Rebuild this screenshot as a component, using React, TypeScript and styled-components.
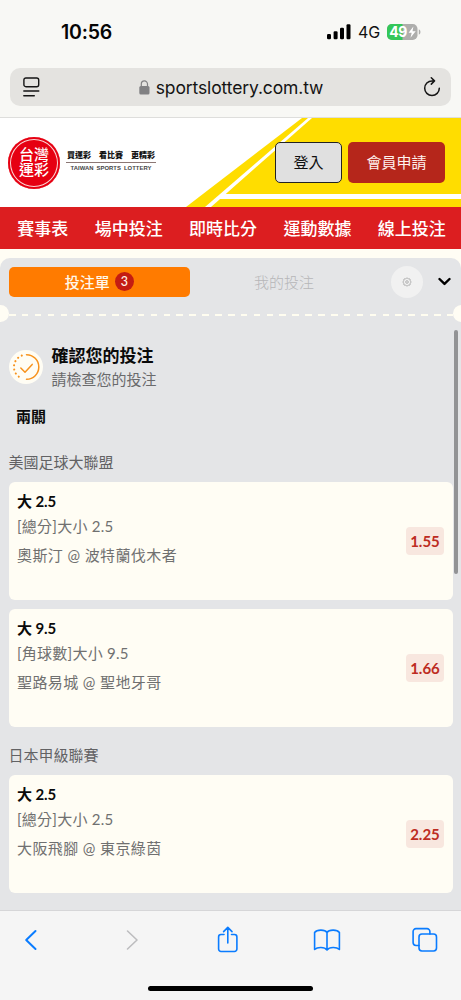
import React from "react";
import styled, { createGlobalStyle } from "styled-components";

const Global = createGlobalStyle`
  *{box-sizing:border-box}
  body{margin:0;background:#f8f8f5;font-family:Lato,"Noto Sans CJK TC",sans-serif;overflow:hidden}
  button{font-family:inherit;padding:0;border:0;background:none}
  svg{display:block;flex:none}
`;

const Screen = styled.div`width:461px;height:1000px;display:flex;flex-direction:column;overflow:hidden;background:#fffdf4;`;

const StatusBar = styled.div`
  height:68px;flex:none;display:flex;align-items:center;justify-content:space-between;
  padding:0 40px 5px 61px;background:#f8f8f5;font-family:Inter,sans-serif;
`;
const Clock = styled.div`font-size:19.5px;font-weight:600;letter-spacing:-0.2px;color:#050505;`;
const Signals = styled.div`display:flex;align-items:center;`;
const Network = styled.span`font-size:16px;color:#111;margin:0 8px 0 7px;letter-spacing:-0.2px;width:21px;`;

const UrlRow = styled.div`height:50px;flex:none;background:#f8f8f5;padding:0 10px;border-bottom:1px solid #dededc;`;
const UrlBar = styled.div`
  height:38px;border-radius:10px;background:#e4e3e0;display:flex;align-items:center;
  justify-content:space-between;padding:0 10px 0 13px;
`;
const Url = styled.div`
  display:flex;align-items:center;gap:6px;font-family:Inter,sans-serif;font-size:17.5px;
  letter-spacing:-0.12px;color:#141414;margin-right:1px;
`;

const SiteHeader = styled.header`height:89px;flex:none;position:relative;background:#fff;display:flex;align-items:center;padding:0 16px 0 8px;`;
const Backdrop = styled.svg`position:absolute;left:0;top:0;`;
const Badge = styled.div`
  width:52px;height:52px;border-radius:50%;background:#e60012;display:flex;align-items:center;justify-content:center;
  box-shadow:inset 0 0 0 2px #e60012,inset 0 0 0 3px #fbd5d5;flex:none;position:relative;
`;
const BadgeText = styled.div`width:34px;display:flex;flex-direction:column;align-items:center;font-size:15px;line-height:15px;font-weight:500;color:#fff;margin-top:-1px;`;
const Tagline = styled.div`margin:-4px 0 0 6px;width:90px;position:relative;`;
const TagTop = styled.div`
  display:flex;justify-content:space-between;font-size:8px;line-height:12px;font-weight:900;color:#111;
  padding:0 1px 1px;border-bottom:1px solid #8b7774;
`;
const TagBottom = styled.div`font:700 5.9px/8px "Liberation Sans",sans-serif;color:#444;text-align:center;padding-top:1px;white-space:nowrap;word-spacing:1.3px;letter-spacing:.04px;`;
const HeaderActions = styled.div`margin-left:auto;display:flex;gap:6px;position:relative;`;
const HeaderButton = styled.button<{ $primary?: boolean }>`
  width:${p => (p.$primary ? 97 : 67)}px;height:41px;border-radius:5px;font-size:15px;line-height:20px;padding-bottom:2px;
  border:${p => (p.$primary ? "0" : "1px solid #222")};
  background:${p => (p.$primary ? "#b5261b" : "#e0e0e0")};color:${p => (p.$primary ? "#fff1ee" : "#111")};
`;

const Nav = styled.nav`
  height:42px;flex:none;background:#dc1e20;display:flex;align-items:center;gap:26.4px;padding:0 0 2px 17.3px;
  color:#fff;font-size:17px;font-weight:500;white-space:nowrap;
`;

const Slip = styled.main`
  margin-top:9px;flex:1;min-height:0;background:#e4e5e7;border-radius:10px 10px 0 0;position:relative;
  display:flex;flex-direction:column;overflow:hidden;
`;
const Tabs = styled.div`height:47px;flex:none;display:flex;align-items:center;padding-left:8.5px;`;
const Tab = styled.button<{ $active?: boolean }>`
  width:${p => (p.$active ? 181.5 : 188)}px;height:30px;border-radius:5px;display:flex;align-items:center;justify-content:center;gap:5px;
  font-size:15px;line-height:20px;background:${p => (p.$active ? "#ff7b00" : "transparent")};
  color:${p => (p.$active ? "#fff8ea" : "#b6b6b8")};font-weight:${p => (p.$active ? 500 : 300)};
`;
const Count = styled.span`
  width:19px;height:19px;border-radius:50%;background:#c41c12;color:#fff3e8;font-size:12.5px;line-height:19px;font-weight:500;text-align:center;
`;
const GearButton = styled.button`
  width:32px;height:32px;border-radius:50%;background:#f1f1f1;display:flex;align-items:center;justify-content:center;margin:0 15px 0 13px;
`;
const Perforation = styled.div`height:18px;flex:none;display:flex;align-items:center;justify-content:space-between;overflow:hidden;`;
const Notch = styled.div<{ $right?: boolean }>`
  width:17px;height:17px;border-radius:50%;background:#fffdf4;flex:none;margin:${p => (p.$right ? "-1px -8.5px 0 0" : "-1px 0 0 -8.5px")};
`;
const Dashes = styled.div`
  flex:1;height:2px;margin-top:1px;
  background:repeating-linear-gradient(90deg,#fffdf0 0 6.6px,transparent 6.6px 12.88px);
`;

const Content = styled.div`padding:0 8.5px;`;
const Confirm = styled.div`display:flex;align-items:center;gap:9px;padding-top:19px;height:68px;`;
const StepIcon = styled.div`width:34px;height:34px;border-radius:50%;background:#fffdf4;display:flex;align-items:center;justify-content:center;`;
const Title = styled.h1`margin:0;font-size:17px;line-height:25px;font-weight:700;color:#0a0a0a;`;
const Subtitle = styled.p`margin:0;font-size:15px;line-height:22px;font-weight:400;color:#6a6a6c;`;
const Parlay = styled.h2`margin:15px 0 0 7.5px;font-size:15px;line-height:20px;font-weight:700;color:#0a0a0a;`;
const League = styled.h3<{ $first?: boolean }>`
  margin:${p => (p.$first ? "26px 0 10px" : "18px 0 10px")};font-size:15px;line-height:20px;font-weight:400;color:#626264;
`;
const Card = styled.article`
  width:444px;height:118px;border-radius:6px;background:#fffdf4;display:flex;align-items:center;justify-content:space-between;
  padding:0 8.5px;&+&{margin-top:9px}
`;
const CardBody = styled.div`align-self:flex-start;padding-top:8px;white-space:nowrap;color:#707070;font-size:15px;`;
const Pick = styled.div`font-weight:700;color:#0a0a0a;line-height:23px;font-size:15px;letter-spacing:-.1px;`;
const Market = styled.div`line-height:27px;letter-spacing:.25px;`;
const Teams = styled.div`line-height:31px;letter-spacing:.4px;`;
const Odds = styled.div`
  width:38px;height:28px;border-radius:4px;background:#f8e7df;color:#bd2c22;font-size:15px;font-weight:700;line-height:28px;text-align:center;
`;
const Scrollbar = styled.div`position:absolute;right:3px;top:72px;width:4px;height:244px;border-radius:2px;background:#929395;`;

const Toolbar = styled.footer`
  height:90px;flex:none;background:#f5f5f5;border-top:1px solid #d6d6d8;display:flex;flex-direction:column;align-items:center;justify-content:space-between;
`;
const ToolRow = styled.div`width:461px;height:58px;display:flex;align-items:center;justify-content:space-between;padding:0 22px 0 17px;`;
const HomeBar = styled.div`width:165px;height:5px;border-radius:3px;background:#000;margin-bottom:9px;`;

const ToolIcon = ({ children, color = "#0a7cff" }: { children: React.ReactNode; color?: string }) => (
  <svg width="28" height="28" viewBox="0 0 28 28" fill="none" stroke={color} strokeWidth="1.6" strokeLinecap="round" strokeLinejoin="round">{children}</svg>
);

const gearPath = Array.from({ length: 32 }, (_, i) => {
  const a = (i / 32) * Math.PI * 2;
  const r = 3.8 + 0.45 * Math.cos(a * 8);
  return `${i ? "L" : "M"}${(5 + r * Math.cos(a)).toFixed(2)} ${(5 + r * Math.sin(a)).toFixed(2)}`;
}).join("") + "Z";

type Bet = { pick: string; market: string; teams: string; odds: string };
const BetCard = ({ pick, market, teams, odds }: Bet) => (
  <Card>
    <CardBody><Pick>{pick}</Pick><Market>{market}</Market><Teams>{teams}</Teams></CardBody>
    <Odds>{odds}</Odds>
  </Card>
);

export default function App() {
  return (
    <Screen>
      <Global />
      <StatusBar>
        <Clock>10:56</Clock>
        <Signals>
          <svg width="24" height="16" viewBox="0 0 24 16" fill="#000">
            <rect x="0" y="10" width="4" height="5.3" rx="1.2" /><rect x="6.6" y="7.3" width="4" height="8" rx="1.2" />
            <rect x="13" y="3.8" width="4" height="11.5" rx="1.2" /><rect x="19.5" y="0.3" width="4" height="15" rx="1.2" />
          </svg>
          <Network>4G</Network>
          <svg width="34" height="16" viewBox="0 0 34 16">
            <defs><clipPath id="cell"><rect width="30.5" height="16" rx="4.8" /></clipPath></defs>
            <g clipPath="url(#cell)"><rect width="31" height="16" fill="#aeaeac" /><rect width="15.5" height="16" fill="#34c759" /></g>
            <path d="M31.8 5.3q1.7.6 1.7 2.7t-1.7 2.7z" fill="#aeaeac" />
            <text x="2.3" y="13" fill="#fff" fontFamily="Inter" fontWeight="700" fontSize="14" textLength="18">49</text>
            <path d="M26.4 2.6 21.6 8.7h3.1l-1.2 5 5.2-6.4h-3.2z" fill="#fff" />
          </svg>
        </Signals>
      </StatusBar>
      <UrlRow>
        <UrlBar>
          <svg width="17" height="20" viewBox="0 0 17 20" fill="none" stroke="#151515" strokeWidth="1.4" strokeLinecap="round">
            <rect x=".9" y="1" width="14.8" height="8.7" rx="2" /><path d="M.8 14h15M.8 18.8h10.5" />
          </svg>
          <Url>
            <svg width="11" height="15" viewBox="0 0 11 15"><rect x="0.3" y="6" width="10.2" height="8.4" rx="1.5" fill="#818183" /><path d="M2.3 6.500V4a3.100 3.100 0 0 1 6.200 0v2.500" fill="none" stroke="#818183" strokeWidth="1.2" /></svg>
            sportslottery.com.tw
          </Url>
          <svg width="18" height="20" viewBox="0 0 18 20" fill="none" stroke="#151515" strokeWidth="1.5" strokeLinecap="round" strokeLinejoin="round">
            <path d="M11 3.900H9A7.300 7.300 0 1 0 16.300 11.200M8.300.8l3.200 3.100-3.200 3.200" />
          </svg>
        </UrlBar>
      </UrlRow>
      <SiteHeader>
        <Backdrop width="461" height="89" viewBox="0 0 461 89">
          <path d="M302 0H461V89H186Z" fill="#ffdd00" />
          <path d="M308 0h4L211 89h-6Z" fill="#fff" />
          <path d="M222 76H461V81H217Z" fill="#fff" />
        </Backdrop>
        <Badge><BadgeText><span>台灣</span><span>運彩</span></BadgeText></Badge>
        <Tagline>
          <TagTop><span>買運彩</span><span>看比賽</span><span>更精彩</span></TagTop>
          <TagBottom>TAIWAN SPORTS LOTTERY</TagBottom>
        </Tagline>
        <HeaderActions><HeaderButton>登入</HeaderButton><HeaderButton $primary>會員申請</HeaderButton></HeaderActions>
      </SiteHeader>
      <Nav>{["賽事表", "場中投注", "即時比分", "運動數據", "線上投注"].map(t => <span key={t}>{t}</span>)}</Nav>
      <Slip>
        <Tabs>
          <Tab $active>投注單<Count>3</Count></Tab>
          <Tab>我的投注</Tab>
          <GearButton>
            <svg width="10" height="10" viewBox="0 0 10 10" fill="none" stroke="#aaa" strokeWidth=".9"><path d={gearPath} /><circle cx="5" cy="5" r="1.3" /></svg>
          </GearButton>
          <svg width="14" height="9" viewBox="0 0 14 9" fill="none" stroke="#000" strokeWidth="2.4" strokeLinecap="round" strokeLinejoin="round"><path d="M1.500 2l5 4.900L11.500 2" /></svg>
        </Tabs>
        <Perforation><Notch /><Dashes /><Notch $right /></Perforation>
        <Content>
          <Confirm>
            <StepIcon>
              <svg width="28" height="28" viewBox="0 0 28 28" fill="none" stroke="#f7931e" strokeWidth="1.5" strokeLinecap="round" strokeLinejoin="round">
                <path d="M14.500 1.700a12.300 12.300 0 0 1 0 24.600M8.800 15l4.200 4.200 7.200-7.800" />
                <path d="M9.800 2.600a12.200 12.200 0 0 0 0 22.800" strokeWidth="2.100" strokeDasharray=".01 4.270" />
              </svg>
            </StepIcon>
            <div><Title>確認您的投注</Title><Subtitle>請檢查您的投注</Subtitle></div>
          </Confirm>
          <Parlay>兩關</Parlay>
          <League $first>美國足球大聯盟</League>
          <BetCard pick="大 2.5" market="[總分]大小 2.5" teams="奧斯汀 @ 波特蘭伐木者" odds="1.55" />
          <BetCard pick="大 9.5" market="[角球數]大小 9.5" teams="聖路易城 @ 聖地牙哥" odds="1.66" />
          <League>日本甲級聯賽</League>
          <BetCard pick="大 2.5" market="[總分]大小 2.5" teams="大阪飛腳 @ 東京綠茵" odds="2.25" />
        </Content>
        <Scrollbar />
      </Slip>
      <Toolbar>
        <ToolRow>
          <ToolIcon><path d="M18.500 5 9.200 14l9.300 9" strokeWidth="2" /></ToolIcon>
          <ToolIcon color="#bdbdbf"><path d="M11.500 5l9.500 9-9.500 9" /></ToolIcon>
          <ToolIcon><path d="M10 8.500H7a2.400 2.400 0 0 0-2.400 2.400v12.200A2.400 2.400 0 0 0 7 25.500h13.500a2.400 2.400 0 0 0 2.400-2.400V10.900a2.400 2.400 0 0 0-2.400-2.400h-3M13.800 17V1.500M9.600 5.600l4.200-4.200L18 5.600" /></ToolIcon>
          <ToolIcon><path d="M14 6.500C12 3.400 4 3.200 1.600 6.500V23.500C4.500 20.800 11.500 20.800 14 24 16.500 20.800 23.500 20.800 26.400 23.500V6.500C24 3.200 16 3.400 14 6.500V24" /></ToolIcon>
          <ToolIcon><path d="M8 19.500H5a2.900 2.900 0 0 1-2.900-2.900V5.500A2.900 2.900 0 0 1 5 2.600h11a2.900 2.900 0 0 1 2.900 2.900V8" /><rect x="8" y="8" width="17.500" height="17" rx="2.900" /></ToolIcon>
        </ToolRow>
        <HomeBar />
      </Toolbar>
    </Screen>
  );
}
